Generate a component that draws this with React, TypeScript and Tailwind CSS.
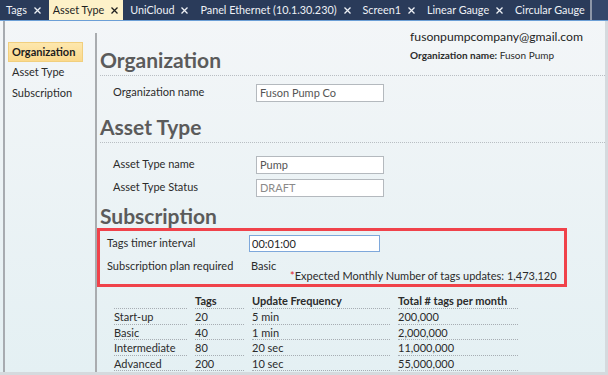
import React from "react";

const tabs = [
  { label: "Tags", active: false },
  { label: "Asset Type", active: true },
  { label: "UniCloud", active: false },
  { label: "Panel Ethernet (10.1.30.230)", active: false },
  { label: "Screen1", active: false },
  { label: "Linear Gauge", active: false },
  { label: "Circular Gauge", active: false, noClose: true },
];

const plans = [
  ["Start-up", "20", "5 min", "200,000"],
  ["Basic", "40", "1 min", "2,000,000"],
  ["Intermediate", "80", "20 sec", "11,000,000"],
  ["Advanced", "200", "10 sec", "55,000,000"],
];

function CloseX() {
  return (
    <svg width="7" height="7" viewBox="0 0 7 7" className="shrink-0">
      <path d="M0.5 0.5L6.5 6.5M6.5 0.5L0.5 6.5" stroke="currentColor" strokeWidth="1.3" />
    </svg>
  );
}

function Field({ label, value, muted }: { label: string; value: string; muted?: boolean }) {
  return (
    <div className="flex items-center h-[23px] pl-[13px]">
      <span className="w-[143px] text-[11px] text-[#2b2b2b]">{label}</span>
      <div
        className={`w-[128px] h-[18px] border border-[#b4b9be] bg-white px-[3px] text-[11px] leading-[16px] ${
          muted ? "text-[#8a8a8a]" : "text-[#555]"
        }`}
      >
        {value}
      </div>
    </div>
  );
}

export default function App() {
  return (
    <div
      className="w-[608px] h-[375px] overflow-hidden flex flex-col bg-gradient-to-b from-[#f4f6f8] to-[#e4f0f3] whitespace-nowrap"
      style={{ fontFamily: 'Lato, "Open Sans", sans-serif' }}
    >
      {/* tab strip */}
      <div className="h-[20px] bg-[#2a3b5a] flex items-stretch shrink-0">
        <div className="flex items-stretch pl-[2px] gap-[3px]">
          {tabs.map((t) => (
            <div
              key={t.label}
              className={`flex items-center gap-[7px] pl-[4px] pr-[5px] text-[10.8px] leading-none ${
                t.active ? "bg-[#fdf1c9] text-[#1f1f1f]" : "text-[#eef1f6]"
              }`}
            >
              <span>{t.label}</span>
              {!t.noClose && <CloseX />}
            </div>
          ))}
        </div>
        <div className="w-[2px] bg-[#8d97a8]" />
        <div className="flex-1 bg-[#34476a]" />
      </div>
      <div className="h-[1px] bg-[#6c9fd6] shrink-0" />

      {/* body */}
      <div className="flex flex-1 min-h-0">
        <nav className="ml-[3px] w-[92px] border-l-[2px] border-[#a7abb0] pt-[21px] pl-[3px] text-[11px]">
          <div className="w-[75px] h-[20px] flex items-center pl-[3px] bg-gradient-to-b from-[#fde7ad] to-[#fbd98c] border border-[#f1cf7e] font-bold text-[#1c1c1c]">
            Organization
          </div>
          <div className="h-[21px] flex items-center pl-[4px] text-[#2b2b2b]">Asset Type</div>
          <div className="h-[21px] flex items-center pl-[4px] text-[#2b2b2b]">Subscription</div>
        </nav>
        <div className="mt-[12px] w-[2px] bg-[#a9acaf]" />

        <main className="flex-1 pt-[8px] min-w-0">
          <div className="pl-[3px]">
            <div className="flex items-end justify-between border-b border-dotted border-[#b9bec3] pb-[1px]">
              <h2 className="text-[21px] leading-[28px] font-bold text-[#5b5b5b]">Organization</h2>
              <div className="pr-[22px] pb-[13px]">
                <div className="text-[12.2px] leading-[16px] text-[#1e1e1e]">fusonpumpcompany@gmail.com</div>
                <div className="mt-[4px] text-[10px] leading-[12px] text-[#2b2b2b]">
                  <span className="font-bold">Organization name:</span> Fuson Pump
                </div>
              </div>
            </div>
            <div className="pt-[5px] pb-[9px]">
              <Field label="Organization name" value="Fuson Pump Co" />
            </div>

            <h2 className="text-[21px] leading-[28px] font-bold text-[#5b5b5b] border-b border-dotted border-[#b9bec3] pb-[1px]">
              Asset Type
            </h2>
            <div className="pt-[10px] pb-[3px]">
              <Field label="Asset Type name" value="Pump" />
              <Field label="Asset Type Status" value="DRAFT" muted />
            </div>

            <h2 className="text-[21px] leading-[28px] font-bold text-[#5b5b5b]">Subscription</h2>
          </div>

          <div className="-mt-[2px] w-[470px] h-[59px] border-[3px] border-[#f0424a] pl-[7px] pt-[3px] text-[11px] text-[#2b2b2b]">
            <div className="flex items-center h-[19px]">
              <span className="w-[142px]">Tags timer interval</span>
              <div className="w-[131px] h-[17px] border border-[#7ea8db] bg-white px-[2px] leading-[15px] text-[#1f1f1f]">
                00:01:00
              </div>
            </div>
            <div className="flex h-[32px] pt-[5px]">
              <span className="w-[144px]">Subscription plan required</span>
              <span className="w-[39px]">Basic</span>
              <span className="pt-[10px]">
                <span className="text-[#e0202a]">*</span>Expected Monthly Number of tags updates: 1,473,120
              </span>
            </div>
          </div>

          <div className="mt-[7px] ml-[17px] grid grid-cols-[73px_49px_138px_120px] gap-x-[8px] text-[11px] leading-[14px] text-[#2b2b2b]">
            <div className="border-b border-dotted border-[#a7adb3] h-[15px]" />
            <div className="border-b border-dotted border-[#a7adb3] h-[15px] font-bold">Tags</div>
            <div className="border-b border-dotted border-[#a7adb3] h-[15px] font-bold">Update Frequency</div>
            <div className="border-b border-dotted border-[#a7adb3] h-[15px] font-bold">Total # tags per month</div>
            {plans.map((row) =>
              row.map((c, i) => (
                <div key={row[0] + i} className="border-b border-dotted border-[#a7adb3] h-[15.6px] pt-[1px]">
                  {c}
                </div>
              ))
            )}
          </div>
        </main>
        <div className="w-[3px] bg-[#d5dade]" />
      </div>
      <div className="h-[3px] bg-[#d5dade] shrink-0" />
    </div>
  );
}
